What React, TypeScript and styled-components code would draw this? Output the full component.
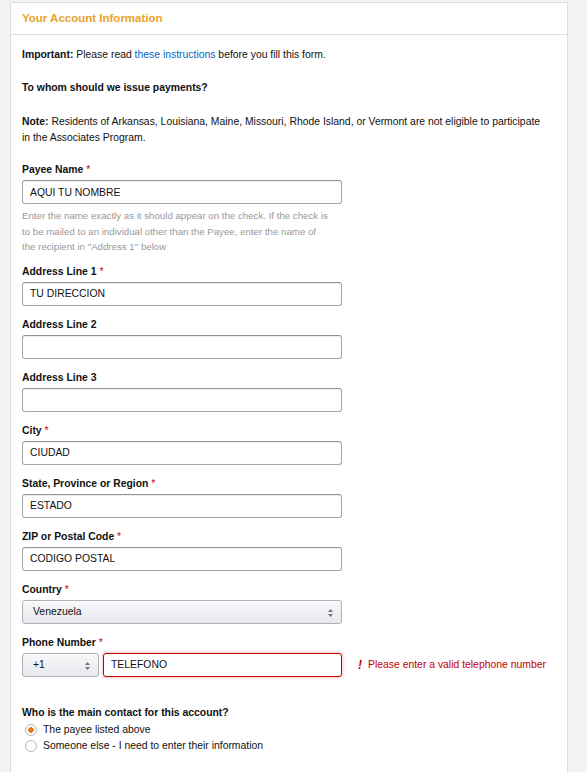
import React from "react";
import styled, { createGlobalStyle } from "styled-components";

const GlobalStyle = createGlobalStyle`
  html, body {
    margin: 0;
    padding: 0;
    background: #f3f3f3;
    font-family: "Liberation Sans", Arial, sans-serif;
    color: #111;
  }
`;

const Page = styled.div`
  padding: 2px 19px 0 10px;
  height: 772px;
  overflow: hidden;
  box-sizing: border-box;
`;

const Panel = styled.section`
  background: #fff;
  border: 1px solid #ddd;
  border-bottom: none;
  min-height: 800px;
`;

const PanelHeader = styled.h2`
  margin: 0;
  height: 31px;
  line-height: 31px;
  padding: 0 11px;
  border-bottom: 1px solid #ddd;
  color: #e8a227;
  font-size: 11.5px;
  font-weight: bold;
`;

const PanelBody = styled.div`
  padding: 12px 20px 0 11px;
  font-size: 10.4px;
  line-height: 16px;
`;

const Para = styled.p<{ $gap?: number }>`
  margin: 0 0 ${(p) => p.$gap ?? 17}px 0;
`;

const Link = styled.a`
  color: #0066c0;
  text-decoration: none;
`;

const Field = styled.div<{ $gap?: number }>`
  margin-bottom: ${(p) => p.$gap ?? 11}px;
`;

const Label = styled.label`
  display: block;
  font-weight: bold;
  line-height: 16px;
  margin-bottom: 2px;
`;

const Req = styled.span`
  color: #c40000;
  font-weight: normal;
`;

const TextInput = styled.input<{ $invalid?: boolean; $width?: number }>`
  display: block;
  box-sizing: border-box;
  width: ${(p) => p.$width ?? 320}px;
  height: 24px;
  padding: 0 7px;
  font-family: inherit;
  font-size: 10.4px;
  color: #111;
  background: #fff;
  border: 1px solid ${(p) => (p.$invalid ? "#c40000" : "#a6a6a6")};
  border-top-color: ${(p) => (p.$invalid ? "#c40000" : "#949494")};
  border-radius: 3px;
  box-shadow: ${(p) =>
    p.$invalid
      ? "0 0 3px 1px rgba(200, 40, 40, 0.25)"
      : "0 1px 0 rgba(255,255,255,.5), 0 1px 0 rgba(0,0,0,.07) inset"};
  outline: none;
`;

const Help = styled.div`
  color: #999;
  font-size: 9.7px;
  line-height: 15.5px;
  margin-top: 4px;
  width: 306px;
`;

const SelectBox = styled.div<{ $width: number }>`
  position: relative;
  box-sizing: border-box;
  width: ${(p) => p.$width}px;
  height: 24px;
  line-height: 22px;
  padding-left: 10px;
  font-size: 10.4px;
  border: 1px solid #adb1b8;
  border-radius: 3px;
  background: linear-gradient(#f7f8fa, #e7e9ec);
  box-shadow: 0 1px 0 rgba(255, 255, 255, 0.6) inset;
  flex-shrink: 0;
`;

const Arrows = styled.svg`
  position: absolute;
  right: 8px;
  top: 8px;
`;

const Row = styled.div`
  display: flex;
  align-items: center;
  gap: 4px;
`;

const Error = styled.div`
  display: flex;
  align-items: center;
  color: #c40000;
  font-size: 10.4px;
  margin-left: 12px;
  white-space: nowrap;
`;

const Bang = styled.span`
  font-style: italic;
  font-weight: bold;
  font-size: 12px;
  margin-right: 6px;
`;

const Question = styled.div`
  font-weight: bold;
  margin-bottom: 1px;
`;

const RadioRow = styled.label`
  display: flex;
  align-items: center;
  height: 16px;
  padding-left: 3px;
`;

const RadioDot = styled.span<{ $checked?: boolean }>`
  box-sizing: border-box;
  width: 12px;
  height: 12px;
  border-radius: 50%;
  border: 1px solid #b5b5b5;
  background: ${(p) =>
    p.$checked
      ? "radial-gradient(circle, #e47911 0 2.5px, #fff 3px)"
      : "#fff"};
  margin-right: 6px;
`;

const SelectArrows = () => (
  <Arrows width="5" height="8" viewBox="0 0 5 8">
    <path d="M2.5 0 L5 3 H0 Z M2.5 8 L0 5 H5 Z" fill="#777" />
  </Arrows>
);

const fields: { label: string; value: string; required: boolean }[] = [
  { label: "Address Line 1", value: "TU DIRECCION", required: true },
  { label: "Address Line 2", value: "", required: false },
  { label: "Address Line 3", value: "", required: false },
  { label: "City", value: "CIUDAD", required: true },
  { label: "State, Province or Region", value: "ESTADO", required: true },
  { label: "ZIP or Postal Code", value: "CODIGO POSTAL", required: true },
];

const App = () => (
  <Page>
    <GlobalStyle />
    <Panel>
      <PanelHeader>Your Account Information</PanelHeader>
      <PanelBody>
        <Para>
          <b>Important:</b> Please read <Link href="#">these instructions</Link>{" "}
          before you fill this form.
        </Para>
        <Para $gap={18}>
          <b>To whom should we issue payments?</b>
        </Para>
        <Para $gap={16}>
          <b>Note:</b> Residents of Arkansas, Louisiana, Maine, Missouri, Rhode
          Island, or Vermont are not eligible to participate in the Associates
          Program.
        </Para>

        <Field $gap={9}>
          <Label>
            Payee Name <Req>*</Req>
          </Label>
          <TextInput defaultValue="AQUI TU NOMBRE" />
          <Help>
            Enter the name exactly as it should appear on the check. If the
            check is to be mailed to an individual other than the Payee, enter
            the name of the recipient in "Address 1" below
          </Help>
        </Field>

        {fields.map((f) => (
          <Field key={f.label}>
            <Label>
              {f.label} {f.required && <Req>*</Req>}
            </Label>
            <TextInput defaultValue={f.value} />
          </Field>
        ))}

        <Field $gap={11}>
          <Label>
            Country <Req>*</Req>
          </Label>
          <SelectBox $width={320}>
            Venezuela
            <SelectArrows />
          </SelectBox>
        </Field>

        <Field $gap={28}>
          <Label>
            Phone Number <Req>*</Req>
          </Label>
          <Row>
            <SelectBox $width={77}>
              +1
              <SelectArrows />
            </SelectBox>
            <TextInput $invalid $width={239} defaultValue="TELEFONO" />
            <Error>
              <Bang>!</Bang>Please enter a valid telephone number
            </Error>
          </Row>
        </Field>

        <Question>Who is the main contact for this account?</Question>
        <RadioRow>
          <RadioDot $checked />
          The payee listed above
        </RadioRow>
        <RadioRow>
          <RadioDot />
          Someone else - I need to enter their information
        </RadioRow>
      </PanelBody>
    </Panel>
  </Page>
);

export default App;
